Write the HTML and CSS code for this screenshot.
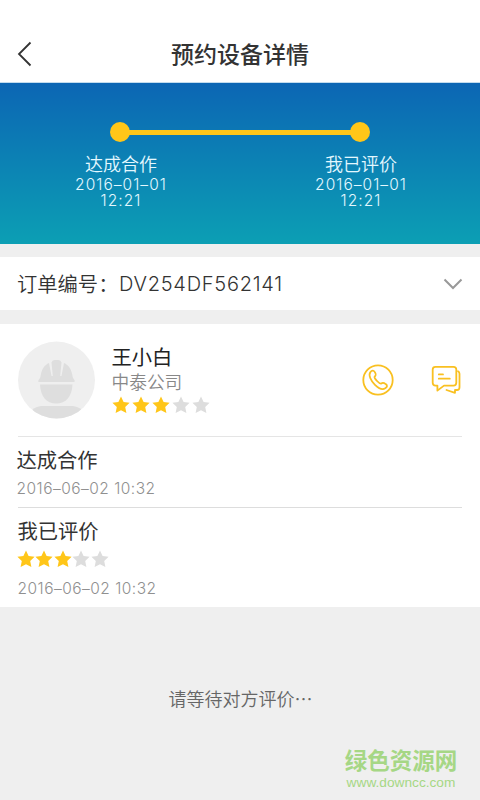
FILE: index.html
```html
<!DOCTYPE html>
<html lang="zh-CN">
<head>
<meta charset="utf-8">
<title>预约设备详情</title>
<link rel="stylesheet" href="styles.css">
</head>
<body>
<svg class="defs" aria-hidden="true"><symbol id="star" viewBox="0 0 18 18"><path d="M9 .6l2.600 5.300 6 .8-4.400 4.200 1.200 6L9 14.300l-5.400 2.600 1.200-6L.4 6.700l6-.8z"/></symbol></svg>
<header class="header">
  <svg class="back" viewBox="0 0 16 26"><path d="M13.500 1.500L2 13l11.500 11.500"/></svg>
  <h1 class="title">预约设备详情</h1>
</header>
<section class="progress">
  <div class="track"><i class="dot"></i><i class="bar"></i><i class="dot"></i></div>
  <div class="steps">
    <div class="step"><b class="step-name">达成合作</b><span class="step-date">2016–01–01<br>12:21</span></div>
    <div class="step"><b class="step-name">我已评价</b><span class="step-date">2016–01–01<br>12:21</span></div>
  </div>
</section>
<section class="order">
  <span class="order-label">订单编号：</span><span class="order-number">DV254DF562141</span>
  <svg class="chevron" viewBox="0 0 20 12"><path d="M1.500 1.500L10 10l8.500-8.500"/></svg>
</section>
<main class="card">
  <div class="person">
    <svg class="avatar" viewBox="0 0 78 78">
      <defs><clipPath id="disc"><circle cx="38.500" cy="39" r="38.500"/></clipPath></defs>
      <circle cx="38.500" cy="39" r="38.500" fill="#efefef"/>
      <g clip-path="url(#disc)" fill="#dedede">
        <path d="M12 78v-5q2-7 11-8h32q9 1 11 8v5z"/>
        <path d="M22 43.500h32.500c-.5 12-6.500 19-16.300 19S22.500 55.500 22 43.500z"/>
        <path d="M21 41c-.8 0-1-1-.4-2 1.400-1.600 1.900-3 2.200-5 1-6 3.700-10 8.200-12l2.500 13h1.300L33.500 21.500q.5-2.500 3-2.500h4q2.500 0 3 2.500L42.200 35h1.300l2.500-13c4.500 2 7.300 6 8.300 12 .3 2 .8 3.400 2.100 5 .6 1 .3 2-.4 2z"/>
      </g>
    </svg>
    <div class="info">
      <strong class="name">王小白</strong>
      <span class="company">中泰公司</span>
      <div class="stars"><svg class="on"><use href="#star"/></svg><svg class="on"><use href="#star"/></svg><svg class="on"><use href="#star"/></svg><svg><use href="#star"/></svg><svg><use href="#star"/></svg></div>
    </div>
    <div class="actions">
      <svg class="phone" viewBox="0 0 32 32"><circle cx="16" cy="16" r="14.700"/><path d="M8.300 8.300c1.800-2.500 3.600-1.800 4.700.1 1.200 2.200 1.200 2.900-.4 4.300-.8 1.500 5 7.700 6.700 6.800 1.600-1.300 2.400-1 4.400.6 1.800 1.300 1.800 2.500-.5 4.200-2.200 1.500-6.300.3-10.200-3.500-4.400-4.300-6.700-9.700-4.700-12.500z"/></svg>
      <svg class="chat" viewBox="0 0 32 32"><path d="M5.500 2.800h18q2.800 0 2.800 2.800v13.200q0 2.800-2.800 2.800H14l-6.600 5v-5H5.500q-2.800 0-2.800-2.800V5.600q0-2.800 2.800-2.800z"/><path d="M8.800 10.400h4.200M8.800 14.700h11M28 7.200q1.500.8 1.500 2.500v13.500q0 2.800-2.500 2.800h-2v2.800L16.500 26"/></svg>
    </div>
  </div>
  <article class="event agreed">
    <h2>达成合作</h2>
    <time>2016–06–02 10:32</time>
  </article>
  <article class="event rated">
    <h2>我已评价</h2>
    <div class="stars small"><svg class="on"><use href="#star"/></svg><svg class="on"><use href="#star"/></svg><svg class="on"><use href="#star"/></svg><svg><use href="#star"/></svg><svg><use href="#star"/></svg></div>
    <time>2016–06–02 10:32</time>
  </article>
</main>
<p class="waiting">请等待对方评价⋯</p>
<footer class="mark"><b>绿色资源网</b><span>www.downcc.com</span></footer>
</body>
</html>
```
FILE: styles.css
```css
* { box-sizing: border-box; }
body {
  margin: 0;
  width: 480px;
  height: 800px;
  overflow: hidden;
  display: flex;
  flex-direction: column;
  background: #efefef;
  color: #333;
  font-family: "Liberation Sans", "Noto Sans CJK SC", sans-serif;
}
h1, h2, p { margin: 0; }
svg { display: block; flex: none; }
.defs { position: absolute; width: 0; height: 0; }
.header {
  height: 83px;
  padding: 26px 17px 0;
  display: grid;
  grid-template-columns: 16px 1fr 16px;
  align-items: center;
  background: #fff;
  border-bottom: 1px solid #c3dcee;
}
.back { width: 16px; height: 26px; fill: none; stroke: #333; stroke-width: 1.8; }
.title { padding-top: 1px; text-align: center; font-size: 23px; line-height: 32px; font-weight: 500; }
.progress {
  height: 161px;
  padding-top: 39px;
  background: linear-gradient(#0c66b4, #0c9fb4);
  color: #e4f8ff;
}
.track { display: flex; align-items: center; width: 260px; height: 20px; margin: 0 auto; }
.dot { width: 20px; height: 20px; border-radius: 50%; background: #ffc619; }
.bar { flex: 1; height: 5px; margin: 0 -2px; background: #ffc619; }
.steps { display: flex; justify-content: space-between; padding: 11px 58px 0 60px; }
.step { width: 122px; display: flex; flex-direction: column; align-items: center; }
.step-name { font-size: 18px; line-height: 24px; font-weight: 350; }
.step-date, .order-number, .event time { font-family: Inter, "Liberation Sans", sans-serif; font-weight: 300; }
.step-date { text-align: center; font-size: 15.500px; line-height: 16px; letter-spacing: 1.050px; }
.order {
  height: 53px;
  margin: 13px 0 14px;
  padding: 0 17px;
  display: flex;
  align-items: center;
  background: #fff;
  font-size: 20px;
}
.order-label { width: 102px; padding-bottom: 1px; font-size: 20.300px; font-weight: 350; white-space: nowrap; }
.order-number { letter-spacing: .75px; }
.chevron { width: 20px; height: 12px; margin-left: auto; fill: none; stroke: #999; stroke-width: 2; }
.card { height: 283px; padding: 0 18px; background: #fff; }
.person { height: 113px; display: flex; border-bottom: 1px solid #e5e5e5; }
.avatar { width: 78px; height: 78px; margin-top: 17px; }
.info { display: flex; flex-direction: column; padding: 21px 0 0 15.500px; }
.name { font-size: 20.300px; line-height: 27px; font-weight: 400; color: #222; }
.company { font-size: 17.700px; line-height: 22px; font-weight: 350; color: #888; }
.stars { display: flex; gap: 2px; margin: 2px 0 0 .5px; fill: #ddd; }
.stars svg { width: 18px; height: 18px; }
.stars .on { fill: #ffc619; }
.actions { display: flex; gap: 36px; margin-left: auto; padding-top: 40px; }
.actions svg { width: 32px; height: 32px; fill: none; stroke: #f9c021; stroke-width: 1.8; stroke-linejoin: round; stroke-linecap: round; }
.event { display: flex; flex-direction: column; }
.event h2 { font-size: 20.300px; line-height: 28px; font-weight: 400; }
.event time { font-size: 15.500px; line-height: 18px; letter-spacing: .48px; color: #909090; }
.agreed { height: 71px; padding-top: 10px; border-bottom: 1px solid #ddd; }
.agreed h2, .agreed time { margin-left: -1.500px; }
.agreed time { margin-top: 5px; }
.rated { padding-top: 10px; }
.rated h2, .rated time { margin-left: -.5px; }
.stars.small { gap: .6px; margin: 4px 0 12px -1.500px; }
.waiting { padding: 80px 0 0 1px; text-align: center; font-size: 18px; line-height: 26px; color: #666; font-weight: 350; }
.mark { margin: auto 21px 10px auto; width: 116px; display: flex; flex-direction: column; align-items: center; color: #a6d785; }
.mark b { font-size: 22.500px; line-height: 27px; white-space: nowrap; }
.mark span { font-size: 13.700px; line-height: 15px; }
```
